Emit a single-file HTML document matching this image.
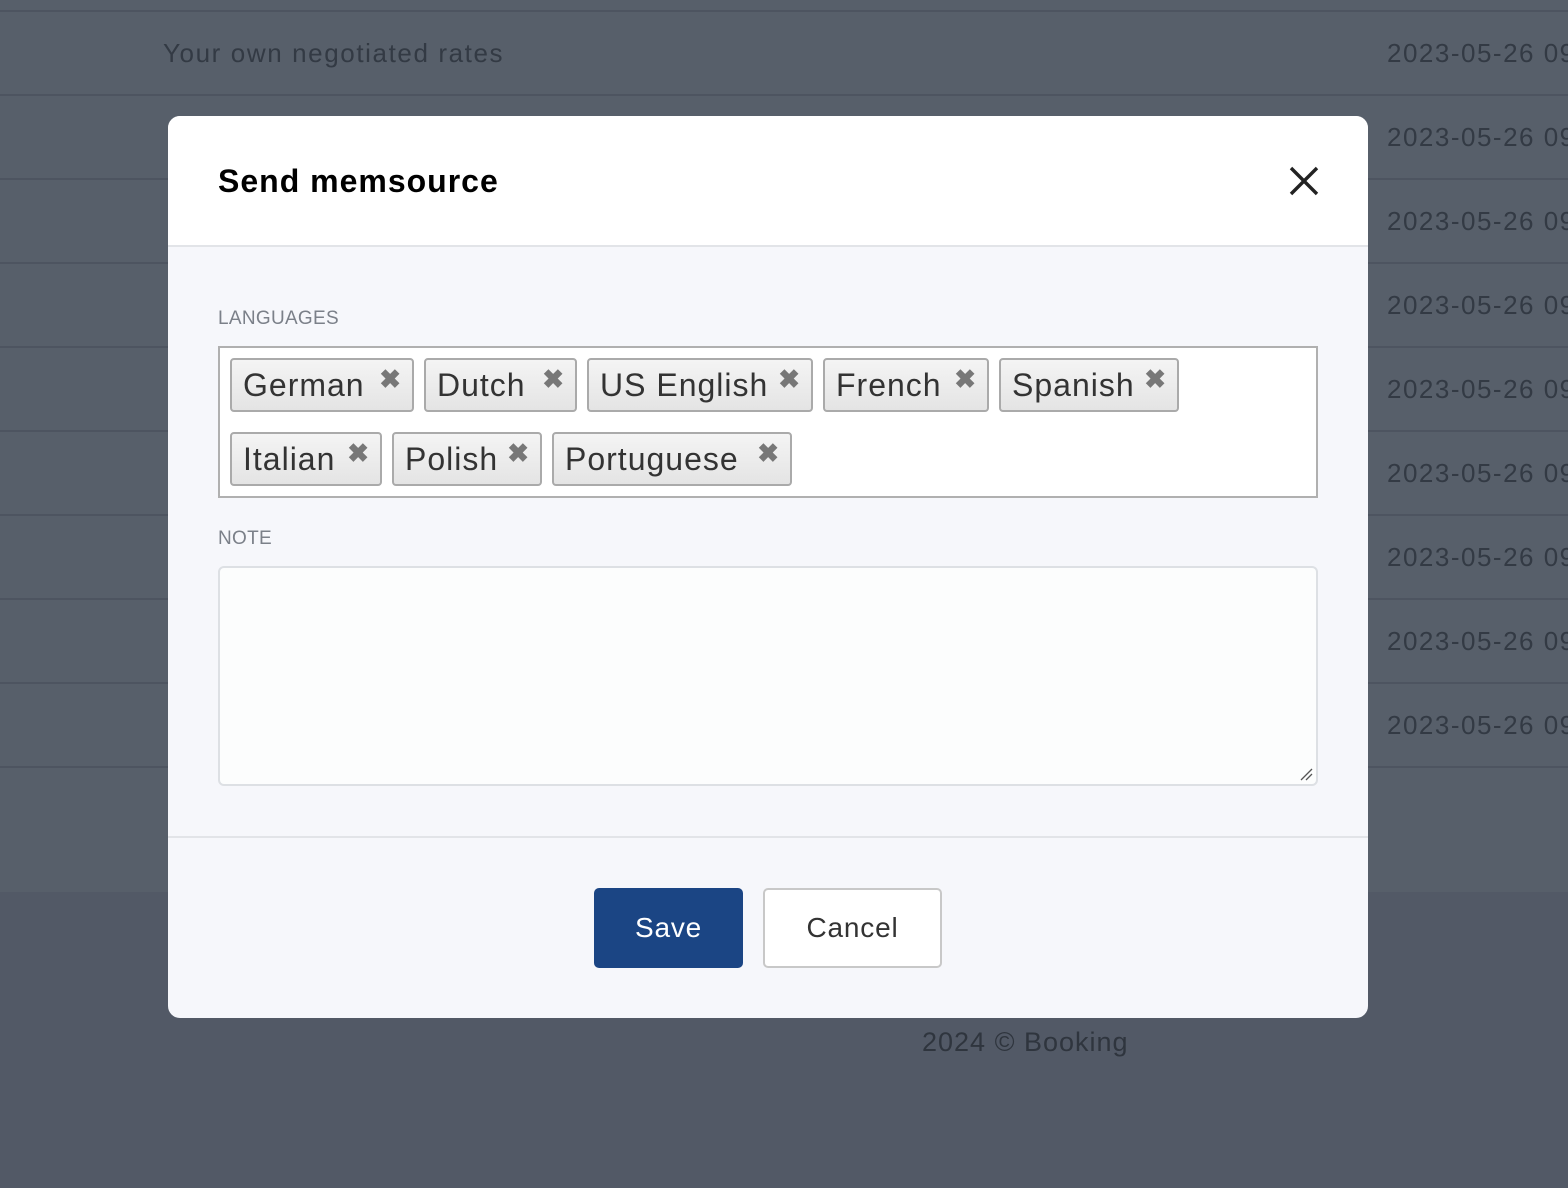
<!DOCTYPE html>
<html><head><style>
*{box-sizing:border-box;margin:0;padding:0}
body{width:1568px;height:1188px;background:#525966;font-family:"Liberation Sans",sans-serif;position:relative;overflow:hidden}
.top{position:absolute;left:0;top:0;width:1568px;height:892px;background:#575f6a}
.row{position:absolute;left:0;width:1568px;height:84px;border-top:2px solid #4d5460}
.row .a{position:absolute;left:163px;top:26px;font-size:26px;color:#333a44;letter-spacing:1.6px}
.row .d{position:absolute;left:1387px;top:26px;font-size:26px;color:#333a44;white-space:nowrap;letter-spacing:1.5px}
.foot{position:absolute;left:922px;top:1027px;font-size:27px;color:#2f353e;letter-spacing:1px}
.modal{position:absolute;left:168px;top:116px;width:1200px;height:902px;background:#f6f7fb;border-radius:12px;overflow:hidden}
.hd{height:131px;background:#fff;border-bottom:2px solid #e2e4e8;position:relative}
.hd h1{position:absolute;left:50px;top:47px;font-size:32px;font-weight:bold;color:#000;letter-spacing:1px}
.close{position:absolute;left:1120px;top:49px}
.lbl{position:absolute;left:50px;font-size:19px;color:#7b8089;letter-spacing:.3px}
.box{position:absolute;left:50px;top:230px;width:1100px;height:152px;border:2px solid #b0b0b0;background:#fff}
.tag{position:absolute;height:54px;border:2px solid #aaa;border-radius:4px;background:linear-gradient(#f4f4f4,#e4e4e4);font-size:32px;color:#333;padding:7px 0 0 11px;white-space:nowrap;letter-spacing:1px}
.tag b{position:absolute;right:10px;top:4px;font-size:26px;color:#777}
.ta{position:absolute;left:50px;top:450px;width:1100px;height:220px;border:2px solid #dde0e4;border-radius:6px;background:#fcfdfd}
.ft{position:absolute;left:0;top:720px;width:1200px;border-top:2px solid #e2e4e8}
.btn{position:absolute;top:772px;height:80px;border-radius:5px;font-size:28px;text-align:center;line-height:80px;letter-spacing:.8px}
</style></head><body>
<div class="top">
<div class="row" style="top:10px"><span class="a">Your own negotiated rates</span><span class="d">2023-05-26 09</span></div>
<div class="row" style="top:94px"><span class="d">2023-05-26 09</span></div>
<div class="row" style="top:178px"><span class="d">2023-05-26 09</span></div>
<div class="row" style="top:262px"><span class="d">2023-05-26 09</span></div>
<div class="row" style="top:346px"><span class="d">2023-05-26 09</span></div>
<div class="row" style="top:430px"><span class="d">2023-05-26 09</span></div>
<div class="row" style="top:514px"><span class="d">2023-05-26 09</span></div>
<div class="row" style="top:598px"><span class="d">2023-05-26 09</span></div>
<div class="row" style="top:682px"><span class="d">2023-05-26 09</span></div>
<div class="row" style="top:766px;height:2px"></div>
</div>
<div class="foot">2024 © Booking</div>
<div class="modal">
<div class="hd"><h1>Send memsource</h1>
<svg class="close" width="32" height="32" viewBox="0 0 32 32"><path d="M3 3L29 29M29 3L3 29" stroke="#222" stroke-width="3.4"/></svg></div>
<div class="lbl" style="top:192px">LANGUAGES</div>
<div class="box">
<div class="tag" style="left:10px;top:10px;width:184px">German<b>✖</b></div>
<div class="tag" style="left:204px;top:10px;width:153px">Dutch<b>✖</b></div>
<div class="tag" style="left:367px;top:10px;width:226px">US English<b>✖</b></div>
<div class="tag" style="left:603px;top:10px;width:166px">French<b>✖</b></div>
<div class="tag" style="left:779px;top:10px;width:180px">Spanish<b>✖</b></div>
<div class="tag" style="left:10px;top:84px;width:152px">Italian<b>✖</b></div>
<div class="tag" style="left:172px;top:84px;width:150px">Polish<b>✖</b></div>
<div class="tag" style="left:332px;top:84px;width:240px">Portuguese<b>✖</b></div>
</div>
<div class="lbl" style="top:412px">NOTE</div>
<div class="ta"><svg style="position:absolute;right:3px;bottom:3px" width="14" height="14"><path d="M2 13L13 2M7 13L13 7" stroke="#555" stroke-width="1.3"/></svg></div>
<div class="ft"></div>
<div class="btn" style="left:426px;width:149px;background:#1b4584;color:#fff">Save</div>
<div class="btn" style="left:595px;width:179px;background:#fff;border:2px solid #c8c8c8;color:#333;line-height:76px">Cancel</div>
</div>
</body></html>
